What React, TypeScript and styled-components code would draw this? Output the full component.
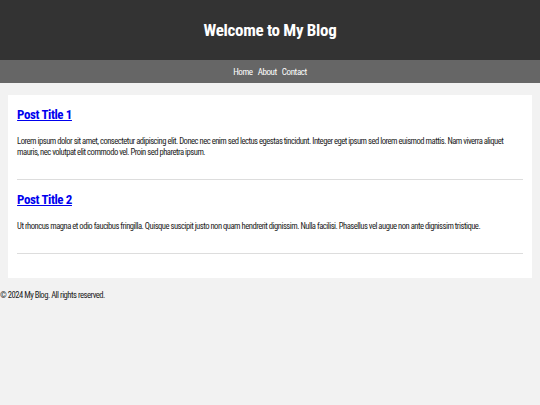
import React from "react";
import styled, { createGlobalStyle } from "styled-components";

const GlobalStyle = createGlobalStyle`
  html, body {
    margin: 0;
    padding: 0;
    background: #f2f2f2;
    font-family: "Roboto Condensed", "Liberation Sans", Arial, sans-serif;
  }
`;

const Header = styled.header`
  background: #333;
  color: #fff;
  height: 60px;
  display: flex;
  align-items: center;
  justify-content: center;
`;

const Title = styled.h1`
  margin: 0;
  font-size: 17px;
  letter-spacing: -0.3px;
  font-weight: 700;
`;

const Nav = styled.nav`
  background: #666;
  height: 23px;
  display: flex;
  align-items: center;
  justify-content: center;
  gap: 5px;
`;

const NavLink = styled.a`
  color: #fff;
  font-size: 9px;
  letter-spacing: -0.4px;
  text-decoration: none;
`;

const Main = styled.main`
  width: 97%;
  margin: 12px auto 0;
  background: #fff;
  padding: 0 9px 24px;
  box-sizing: border-box;
`;

const Post = styled.article`
  padding: 11px 0 21px;
  border-bottom: 1px solid #ddd;
`;

const PostTitle = styled.h2`
  margin: 0 0 12px;
  font-size: 13px;
  letter-spacing: -0.4px;
  line-height: 18px;
  font-weight: 700;
  a {
    color: #0000ee;
  }
`;

const PostBody = styled.p`
  margin: 0;
  font-size: 8.6px;
  letter-spacing: -0.5px;
  line-height: 11px;
  color: #222;
`;

const Footer = styled.footer`
  margin-top: 12px;
  font-size: 8.6px;
  letter-spacing: -0.5px;
  line-height: 11px;
  color: #222;
`;

const posts = [
  {
    title: "Post Title 1",
    body:
      "Lorem ipsum dolor sit amet, consectetur adipiscing elit. Donec nec enim sed lectus egestas tincidunt. Integer eget ipsum sed lorem euismod mattis. Nam viverra aliquet mauris, nec volutpat elit commodo vel. Proin sed pharetra ipsum.",
  },
  {
    title: "Post Title 2",
    body:
      "Ut rhoncus magna et odio faucibus fringilla. Quisque suscipit justo non quam hendrerit dignissim. Nulla facilisi. Phasellus vel augue non ante dignissim tristique.",
  },
];

export default function App() {
  return (
    <>
      <GlobalStyle />
      <Header>
        <Title>Welcome to My Blog</Title>
      </Header>
      <Nav>
        <NavLink href="#">Home</NavLink>
        <NavLink href="#">About</NavLink>
        <NavLink href="#">Contact</NavLink>
      </Nav>
      <Main>
        {posts.map((p) => (
          <Post key={p.title}>
            <PostTitle>
              <a href="#">{p.title}</a>
            </PostTitle>
            <PostBody>{p.body}</PostBody>
          </Post>
        ))}
      </Main>
      <Footer>© 2024 My Blog. All rights reserved.</Footer>
    </>
  );
}
